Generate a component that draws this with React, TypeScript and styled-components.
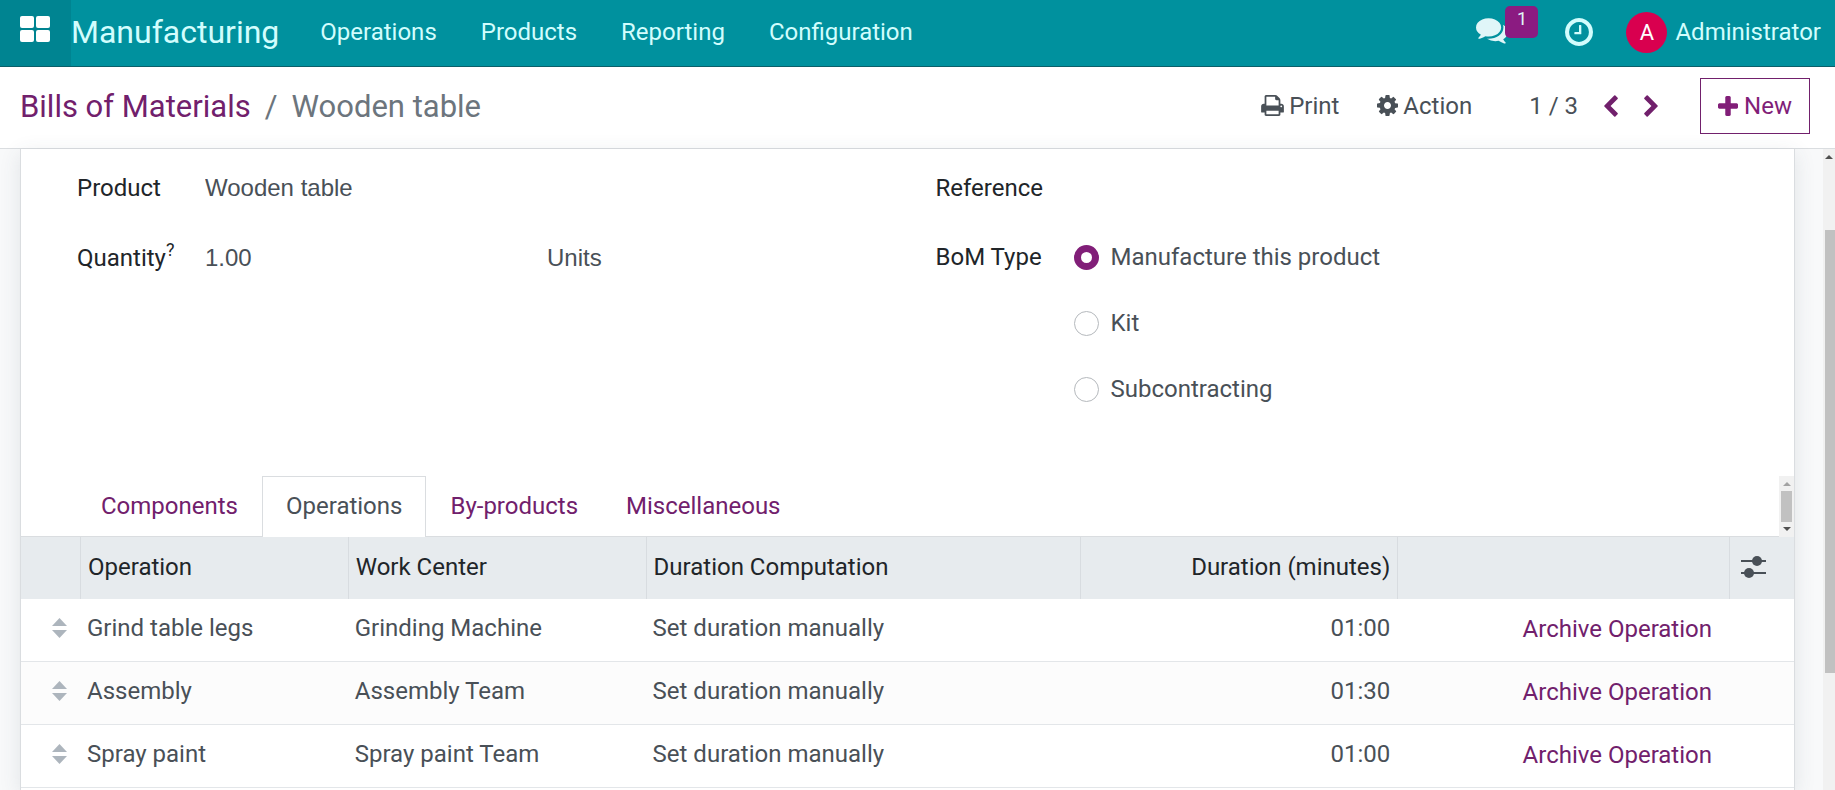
import React from "react";
import styled, { createGlobalStyle } from "styled-components";

const Global = createGlobalStyle`
  * { box-sizing: border-box; }
  html, body, #root { height: 100%; }
  body {
    margin: 0;
    overflow: hidden;
    background: #fff;
    color: #495057;
    font: 24px/36px Roboto, "Liberation Sans", sans-serif;
  }
  button, input { font: inherit; color: inherit; }
  button { padding: 0; border: 0; background: none; cursor: pointer; }
  a { color: inherit; text-decoration: none; }
`;

const Shell = styled.div`
  display: flex;
  flex-direction: column;
  height: 100%;
`;

const Navbar = styled.header`
  display: flex;
  flex: none;
  align-items: stretch;
  height: 67px;
  padding-right: 14px;
  background: #00919e;
  border-bottom: 1px solid #0b5f69;
  color: #d2fdfd;
`;

const AppsButton = styled.button`
  display: flex;
  align-items: center;
  width: 71px;
  padding: 0 0 8px 20px;
  background: #008491;
`;

const Brand = styled.a`
  display: flex;
  align-items: center;
  padding-bottom: 2px;
  font-size: 32px;
`;

const Menu = styled.nav`
  display: flex;
  flex: 1;
  align-items: center;
  gap: 44px;
  margin-left: 41px;
  padding-bottom: 2px;
`;

const Tray = styled.div`
  display: flex;
  align-items: center;
  padding-bottom: 2px;
`;

const MessagesButton = styled.button`
  position: relative;
  display: flex;
  margin-right: 57px;
  color: #e0f6f8;
`;

const Badge = styled.span`
  position: absolute;
  top: -12px;
  left: 29px;
  width: 33px;
  height: 32px;
  border-radius: 5px;
  background: #8b1b81;
  font-size: 18px;
  line-height: 26px;
`;

const ClockButton = styled.button`
  display: flex;
  margin-right: 33px;
`;

const UserButton = styled.button`
  display: flex;
  align-items: center;
  gap: 8px;
`;

const Avatar = styled.span`
  width: 41px;
  height: 41px;
  border-radius: 50%;
  background: #d9004f;
  color: #fff;
  font-size: 22px;
  line-height: 41px;
`;

const ControlPanel = styled.div`
  display: flex;
  flex: none;
  align-items: center;
  height: 82px;
  padding: 0 25px 4px 20px;
  border-bottom: 1px solid #dadde0;
`;

const Breadcrumb = styled.nav`
  display: flex;
  flex: 1;
  gap: 14px;
  padding-top: 2px;
  color: #6c757d;
  font-size: 31px;
  a { color: #71206c; }
`;

const ToolButton = styled.button`
  display: flex;
  align-items: center;
  gap: 5px;
  margin-right: 38px;
`;

const Pager = styled.div`
  display: flex;
  align-items: center;
  gap: 26px;
  margin: 0 42px 0 19px;
  button { display: flex; color: #71206c; }
`;

const NewButton = styled.button`
  display: flex;
  align-items: center;
  justify-content: center;
  gap: 6px;
  width: 110px;
  height: 56px;
  border: 1px solid #71206c;
  color: #811e78;
`;

const Body = styled.div`
  display: flex;
  flex: 1;
  min-height: 0;
  background: #f8f9fa;
`;

const Sheet = styled.main`
  flex: 1;
  min-width: 0;
  margin: 0 28px 0 20px;
  overflow: clip;
  overflow-clip-margin: 30px;
  border: solid #dadde0;
  border-width: 0 1px;
  background: #fff;
  box-shadow: 0 5px 20px rgba(60, 70, 90, 0.12);
`;

const FormGrid = styled.div`
  display: grid;
  grid-template-columns: 1fr 1fr;
  column-gap: 56px;
  height: 327px;
  padding: 21px 56px 0;
`;

const FormColumn = styled.div<{ $gap: number }>`
  display: flex;
  flex-direction: column;
  gap: ${(p) => p.$gap}px;
`;

const Field = styled.div<{ $label: number }>`
  display: grid;
  grid-template-columns: ${(p) => p.$label}px 1fr;
  align-items: start;
`;

const Label = styled.label`
  color: #212529;
  white-space: nowrap;
  sup { font-size: 18px; line-height: 0; vertical-align: 10px; }
`;

const TextInput = styled.input`
  width: 100%;
  height: 36px;
  padding: 0;
  border: 0;
  outline: 0;
  background: none;
  font-family: "Liberation Sans", sans-serif;
`;

const QuantityInputs = styled.div`
  display: grid;
  grid-template-columns: 342px 1fr;
`;

const Options = styled.div`
  display: flex;
  flex-direction: column;
  gap: 30px;
`;

const Option = styled.label`
  display: flex;
  align-items: center;
  gap: 12px;
`;

const Radio = styled.input`
  appearance: none;
  width: 25px;
  height: 25px;
  margin: 0;
  border: 1px solid #b5b9bd;
  border-radius: 50%;
  &:checked { border: 7px solid #811e78; }
`;

const TabStrip = styled.div`
  display: flex;
  justify-content: space-between;
  height: 61px;
  padding-left: 56px;
  border-bottom: 1px solid #dadde0;
`;

const Tabs = styled.div`
  display: flex;
  height: 61px;
`;

const Tab = styled.button<{ $active?: boolean }>`
  padding: 0 23px 2px;
  border: 1px solid ${(p) => (p.$active ? "#dadde0" : "transparent")};
  border-bottom: 0;
  background: ${(p) => (p.$active ? "#fff" : "none")};
  color: ${(p) => (p.$active ? "#495057" : "#71206c")};
`;

const TabScroll = styled.div`
  display: flex;
  flex-direction: column;
  align-items: center;
  width: 15px;
  height: 61px;
  background: #f1f1f1;
`;

const Arrow = styled.span<{ $down?: boolean; $color: string }>`
  flex: none;
  width: 0;
  height: 0;
  margin: ${(p) => (p.$down ? "5px" : "6px")} 0 5px;
  border: 4px solid transparent;
  border-${(p) => (p.$down ? "top" : "bottom")}-color: ${(p) => p.$color};
  border-${(p) => (p.$down ? "bottom" : "top")}-width: 0;
`;

const TabThumb = styled.span`
  width: 11px;
  height: 31px;
  background: #c1c1c1;
`;

const Table = styled.table`
  width: 100%;
  border-collapse: separate;
  border-spacing: 0;
  table-layout: fixed;
`;

const Th = styled.th<{ $align?: string }>`
  height: 62px;
  padding: 0 7px 2px;
  border-left: 1px solid #d8dce0;
  background: #e7ebee;
  color: #212529;
  font-weight: 400;
  text-align: ${(p) => p.$align || "left"};
  &:first-child { border-left: 0; }
  button, svg { display: block; }
`;

const Row = styled.tr`
  &:nth-child(even) { background: #fcfcfc; }
`;

const Td = styled.td<{ $align?: string }>`
  height: 63px;
  padding: 0 7px 4px;
  border-bottom: 1px solid #e3e6e9;
  text-align: ${(p) => p.$align || "left"};
  white-space: nowrap;
`;

const HandleCell = styled(Td)`
  padding: 0 0 4px 31px;
  svg { display: block; }
`;

const ArchiveCell = styled(Td)`
  padding: 0 17px 2px 0;
  text-align: right;
  button { color: #71206c; }
`;

const PageScroll = styled.div`
  display: flex;
  flex-direction: column;
  align-items: center;
  width: 12px;
  background: #f1f1f1;
`;

const PageThumb = styled.span`
  align-self: flex-end;
  width: 10px;
  height: 443px;
  margin-top: 66px;
  background: #c1c1c1;
`;

type IconProps = { box: string; w: number; h: number; d: string };

const Icon = ({ box, w, h, d }: IconProps) => (
  <svg width={w} height={h} viewBox={box} fill="currentColor" aria-hidden>
    <path d={d} />
  </svg>
);

const icons = {
  print: {
    box: "64 128 1664 1536", w: 23, h: 21,
    d: "M448 1536h896v-256h-896v256zm0-640h896v-384h-160q-40 0-68-28t-28-68v-160h-640v640zm1152 64q0-26-19-45t-45-19-45 19-19 45 19 45 45 19 45-19 19-45zm128 0v416q0 13-9.500 22.500t-22.500 9.500h-224v160q0 40-28 68t-68 28h-960q-40 0-68-28t-28-68v-160h-224q-13 0-22.500-9.500t-9.500-22.500v-416q0-79 56.500-135.500t135.500-56.500h64v-544q0-40 28-68t68-28h672q40 0 88 20t76 48l152 152q28 28 48 76t20 88v256h64q79 0 135.500 56.500t56.500 135.500z",
  },
  cog: {
    box: "128 128 1536 1536", w: 21, h: 21,
    d: "M1152 896q0-106-75-181t-181-75-181 75-75 181 75 181 181 75 181-75 75-181zm512-109v222q0 12-8 23t-20 13l-185 28q-19 54-39 91 35 50 107 138 10 12 10 25t-9 23q-27 37-99 108t-94 71q-12 0-26-9l-138-108q-44 23-91 38-16 136-29 186-7 28-36 28h-222q-14 0-24.500-8.500t-11.500-21.500l-28-184q-49-16-90-37l-141 107q-10 9-25 9-14 0-25-11-126-114-165-168-7-10-7-23 0-12 8-23 15-21 51-66.500t54-70.500q-27-50-41-99l-183-27q-13-2-21-12.500t-8-23.500v-222q0-12 8-23t19-13l186-28q14-46 39-92-40-57-107-138-10-12-10-24 0-10 9-23 26-36 98.500-107.500t94.500-71.500q13 0 26 10l138 107q44-23 91-38 16-136 29-186 7-28 36-28h222q14 0 24.500 8.500t11.500 21.500l28 184q49 16 90 37l142-107q9-9 24-9 13 0 25 10 129 119 165 170 7 8 7 22 0 12-8 23-15 21-51 66.500t-54 70.500q26 50 41 98l183 28q13 2 21 12.500t8 23.500z",
  },
  prev: {
    box: "410 0 1036 1664", w: 14, h: 22,
    d: "M1427 301l-531 531 531 531q19 19 19 45t-19 45l-166 166q-19 19-45 19t-45-19l-742-742q-19-19-19-45t19-45l742-742q19-19 45-19t45 19l166 166q19 19 19 45t-19 45z",
  },
  next: {
    box: "346 0 1036 1664", w: 14, h: 22,
    d: "M1363 877l-742 742q-19 19-45 19t-45-19l-166-166q-19-19-19-45t19-45l531-531-531-531q-19-19-19-45t19-45l166-166q19-19 45-19t45 19l742 742q19 19 19 45t-19 45z",
  },
  plus: {
    box: "192 128 1408 1408", w: 20, h: 20,
    d: "M1600 736v192q0 40-28 68t-68 28h-416v416q0 40-28 68t-68 28h-192q-40 0-68-28t-28-68v-416h-416q-40 0-68-28t-28-68v-192q0-40 28-68t68-28h416v-416q0-40 28-68t68-28h192q40 0 68 28t28 68v416h416q40 0 68 28t28 68z",
  },
  clock: {
    box: "128 128 1536 1536", w: 28, h: 28,
    d: "M1024 544v448q0 14-9 23t-23 9h-320q-14 0-23-9t-9-23v-64q0-14 9-23t23-9h224v-352q0-14 9-23t23-9h64q14 0 23 9t9 23zm416 352q0-148-73-273t-198-198-273-73-273 73-198 198-73 273 73 273 198 198 273 73 273-73 198-198 73-273zm224 0q0 209-103 385.500t-279.500 279.500-385.500 103-385.500-103-279.500-279.500-103-385.500 103-385.500 279.500-279.500 385.500-103 385.500 103 279.500 279.500 103 385.500z",
  },
  comments: {
    box: "0 0 1792 1536", w: 32, h: 28,
    d: "M1408 512q0 139-94 257t-256.500 186.500T704 1024q-86 0-176-16-124 88-278 128-36 9-86 16h-3q-11 0-20.500-8t-11.500-21q-1-3-1-6.500t.500-6.500 2-6l2.500-5 3.500-5.500 4-5 4.500-5 4-4.500q5-6 23-25t26-29.500 22.500-29 25-38.500 20.500-44Q142 846 71 739T0 512q0-139 94-257t256.500-186.500T704 0t353.500 68.500T1314 255t94 257zm384 256q0 120-71 224.500T1526 1169q10 24 20.500 44t25 38.500 22.500 29 26 29.500 23 25q1 1 4 4.500t4.500 5 4 5 3.500 5.500l2.500 5 2 6 .500 6.500-1 6.500q-3 14-13 22t-22 7q-50-7-86-16-154-40-278-128-90 16-176 16-271 0-472-132 58 4 88 4 161 0 309-45t264-129q125-92 192-212t67-254q0-77-23-152 129 71 204 178t75 230z",
  },
};

const rows = [
  ["Grind table legs", "Grinding Machine", "Set duration manually", "01:00"],
  ["Assembly", "Assembly Team", "Set duration manually", "01:30"],
  ["Spray paint", "Spray paint Team", "Set duration manually", "01:00"],
];

export default function App() {
  return (
    <Shell>
      <Global />
      <Navbar>
        <AppsButton aria-label="Apps">
          <svg width="30" height="26" viewBox="0 0 30 26" fill="#fff">
            <rect width="14" height="12" rx="2" />
            <rect x="16" width="14" height="12" rx="2" />
            <rect y="14" width="14" height="12" rx="2" />
            <rect x="16" y="14" width="14" height="12" rx="2" />
          </svg>
        </AppsButton>
        <Brand href="#">Manufacturing</Brand>
        <Menu>
          <a href="#">Operations</a>
          <a href="#">Products</a>
          <a href="#">Reporting</a>
          <a href="#">Configuration</a>
        </Menu>
        <Tray>
          <MessagesButton aria-label="Messages">
            <Icon {...icons.comments} />
            <Badge>1</Badge>
          </MessagesButton>
          <ClockButton aria-label="Activities">
            <Icon {...icons.clock} />
          </ClockButton>
          <UserButton>
            <Avatar>A</Avatar>
            Administrator
          </UserButton>
        </Tray>
      </Navbar>
      <ControlPanel>
        <Breadcrumb aria-label="Breadcrumb">
          <a href="#">Bills of Materials</a>
          <span>/</span>
          <span>Wooden table</span>
        </Breadcrumb>
        <ToolButton>
          <Icon {...icons.print} />
          Print
        </ToolButton>
        <ToolButton>
          <Icon {...icons.cog} />
          Action
        </ToolButton>
        <Pager>
          <span>1 / 3</span>
          <button aria-label="Previous"><Icon {...icons.prev} /></button>
          <button aria-label="Next"><Icon {...icons.next} /></button>
        </Pager>
        <NewButton>
          <Icon {...icons.plus} />
          New
        </NewButton>
      </ControlPanel>
      <Body>
        <Sheet>
          <FormGrid>
            <FormColumn $gap={34}>
              <Field $label={128}>
                <Label htmlFor="product">Product</Label>
                <TextInput id="product" defaultValue="Wooden table" />
              </Field>
              <Field $label={128}>
                <Label htmlFor="quantity">Quantity<sup>?</sup></Label>
                <QuantityInputs>
                  <TextInput id="quantity" defaultValue="1.00" />
                  <TextInput aria-label="Unit of measure" defaultValue="Units" />
                </QuantityInputs>
              </Field>
            </FormColumn>
            <FormColumn $gap={33}>
              <Field $label={138}>
                <Label htmlFor="reference">Reference</Label>
                <TextInput id="reference" />
              </Field>
              <Field $label={138} role="radiogroup" aria-labelledby="bom-type">
                <Label as="span" id="bom-type">BoM Type</Label>
                <Options>
                  <Option><Radio type="radio" name="type" defaultChecked />Manufacture this product</Option>
                  <Option><Radio type="radio" name="type" />Kit</Option>
                  <Option><Radio type="radio" name="type" />Subcontracting</Option>
                </Options>
              </Field>
            </FormColumn>
          </FormGrid>
          <TabStrip>
            <Tabs role="tablist">
              <Tab role="tab">Components</Tab>
              <Tab role="tab" $active aria-selected>Operations</Tab>
              <Tab role="tab">By-products</Tab>
              <Tab role="tab">Miscellaneous</Tab>
            </Tabs>
            <TabScroll aria-hidden>
              <Arrow $color="#a3a3a3" />
              <TabThumb />
              <Arrow $down $color="#505050" />
            </TabScroll>
          </TabStrip>
          <Table>
            <colgroup>
              <col style={{ width: "59px" }} />
              <col style={{ width: "15.100%" }} />
              <col style={{ width: "16.800%" }} />
              <col style={{ width: "24.500%" }} />
              <col style={{ width: "17.900%" }} />
              <col />
              <col style={{ width: "65px" }} />
            </colgroup>
            <thead>
              <tr>
                <Th />
                <Th>Operation</Th>
                <Th>Work Center</Th>
                <Th>Duration Computation</Th>
                <Th $align="right">Duration (minutes)</Th>
                <Th />
                <Th>
                  <button aria-label="Optional columns">
                    <svg width="34" height="24" viewBox="0 0 34 24" fill="#495057">
                      <path d="M4 5h25v2H4zM4 17h25v2H4z" />
                      <circle cx="20" cy="6" r="5" />
                      <circle cx="12" cy="18" r="5" />
                    </svg>
                  </button>
                </Th>
              </tr>
            </thead>
            <tbody>
              {rows.map((r) => (
                <Row key={r[0]}>
                  <HandleCell>
                    <svg width="15" height="20" viewBox="0 0 15 20" fill="#adb5bd">
                      <path d="M7.500 0L15 8H0zM0 12h15l-7.500 8z" />
                    </svg>
                  </HandleCell>
                  <Td>{r[0]}</Td>
                  <Td>{r[1]}</Td>
                  <Td>{r[2]}</Td>
                  <Td $align="right">{r[3]}</Td>
                  <ArchiveCell><button>Archive Operation</button></ArchiveCell>
                  <Td />
                </Row>
              ))}
            </tbody>
          </Table>
        </Sheet>
        <PageScroll aria-hidden>
          <Arrow $color="#505050" />
          <PageThumb />
        </PageScroll>
      </Body>
    </Shell>
  );
}
